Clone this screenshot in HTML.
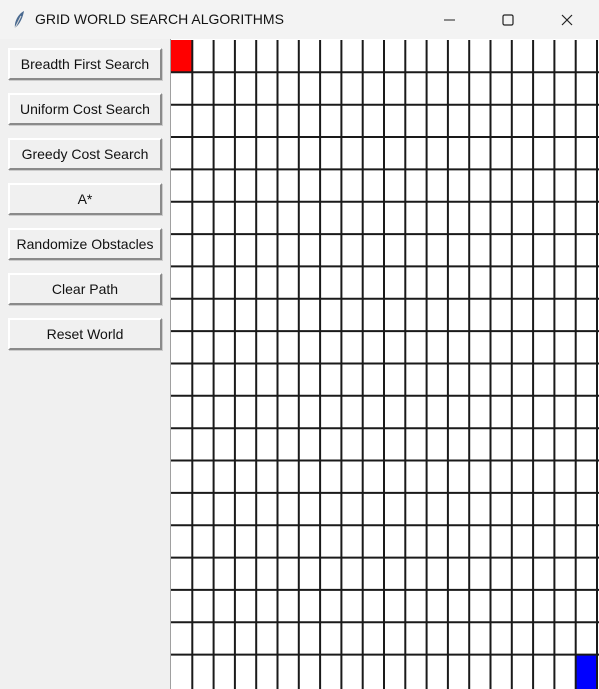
<!DOCTYPE html>
<html><head><style>
body{margin:0;width:599px;height:689px;overflow:hidden;background:#f0f0f0;font-family:"Liberation Sans",sans-serif;position:relative}
.title{position:absolute;left:0;top:0;width:599px;height:39px;background:#f3f3f3;}
.title span{position:absolute;left:35px;top:11px;font-size:14px;color:#111}
.btn{position:absolute;left:8px;width:150px;height:28px;background:#f0f0f0;border-top:2px solid #fff;border-left:2px solid #fff;border-right:2px solid #8a8a8a;border-bottom:2px solid #8a8a8a;box-shadow:1px 1px 0 #ccc;font-size:14px;color:#111;text-align:center;line-height:28px;box-sizing:content-box}
</style></head><body>
<div class="title">
<svg style="position:absolute;left:12px;top:10px" width="14" height="20"><path d="M3 18 C2 12 6 4 12 1 C11 7 8 14 3 18Z" fill="#4a6a90"/><path d="M3 18 L9 6" stroke="#ddd" stroke-width="1"/></svg>
<span>GRID WORLD SEARCH ALGORITHMS</span>
<svg style="position:absolute;left:440px;top:12px" width="140" height="16">
<line x1="4" y1="8" x2="15" y2="8" stroke="#222" stroke-width="1"/>
<rect x="63" y="3" width="10" height="10" rx="1.5" fill="none" stroke="#222" stroke-width="1.2"/>
<path d="M122 3 L132 13 M132 3 L122 13" stroke="#222" stroke-width="1.2"/>
</svg>
</div>
<div class="btn" style="top:48px">Breadth First Search</div>
<div class="btn" style="top:93px">Uniform Cost Search</div>
<div class="btn" style="top:138px">Greedy Cost Search</div>
<div class="btn" style="top:183px">A*</div>
<div class="btn" style="top:228px">Randomize Obstacles</div>
<div class="btn" style="top:273px">Clear Path</div>
<div class="btn" style="top:318px">Reset World</div>
<svg style="position:absolute;left:0;top:0" width="599" height="689">
<rect x="170" y="39" width="429" height="650" fill="#fff"/>
<line x1="170.5" y1="39" x2="170.5" y2="689" stroke="#a0a0a0" stroke-width="1"/>
<rect x="171" y="40" width="21" height="32" fill="#f00"/>
<rect x="576" y="655" width="21" height="34" fill="#00f"/>
<g stroke="#1a1a1a" stroke-width="2">
<line x1="192.3" y1="40" x2="192.3" y2="689"/><line x1="213.6" y1="40" x2="213.6" y2="689"/><line x1="234.9" y1="40" x2="234.9" y2="689"/><line x1="256.2" y1="40" x2="256.2" y2="689"/><line x1="277.5" y1="40" x2="277.5" y2="689"/><line x1="298.8" y1="40" x2="298.8" y2="689"/><line x1="320.1" y1="40" x2="320.1" y2="689"/><line x1="341.4" y1="40" x2="341.4" y2="689"/><line x1="362.7" y1="40" x2="362.7" y2="689"/><line x1="384" y1="40" x2="384" y2="689"/><line x1="405.3" y1="40" x2="405.3" y2="689"/><line x1="426.6" y1="40" x2="426.6" y2="689"/><line x1="447.9" y1="40" x2="447.9" y2="689"/><line x1="469.2" y1="40" x2="469.2" y2="689"/><line x1="490.5" y1="40" x2="490.5" y2="689"/><line x1="511.8" y1="40" x2="511.8" y2="689"/><line x1="533.1" y1="40" x2="533.1" y2="689"/><line x1="554.4" y1="40" x2="554.4" y2="689"/><line x1="575.7" y1="40" x2="575.7" y2="689"/><line x1="597" y1="40" x2="597" y2="689"/>
<line x1="171" y1="72.3" x2="599" y2="72.3"/><line x1="171" y1="104.7" x2="599" y2="104.7"/><line x1="171" y1="137" x2="599" y2="137"/><line x1="171" y1="169.4" x2="599" y2="169.4"/><line x1="171" y1="201.7" x2="599" y2="201.7"/><line x1="171" y1="234.1" x2="599" y2="234.1"/><line x1="171" y1="266.4" x2="599" y2="266.4"/><line x1="171" y1="298.8" x2="599" y2="298.8"/><line x1="171" y1="331.1" x2="599" y2="331.1"/><line x1="171" y1="363.5" x2="599" y2="363.5"/><line x1="171" y1="395.8" x2="599" y2="395.8"/><line x1="171" y1="428.2" x2="599" y2="428.2"/><line x1="171" y1="460.5" x2="599" y2="460.5"/><line x1="171" y1="492.9" x2="599" y2="492.9"/><line x1="171" y1="525.2" x2="599" y2="525.2"/><line x1="171" y1="557.6" x2="599" y2="557.6"/><line x1="171" y1="589.9" x2="599" y2="589.9"/><line x1="171" y1="622.3" x2="599" y2="622.3"/><line x1="171" y1="654.6" x2="599" y2="654.6"/>
</g>
</svg>
</body></html>
